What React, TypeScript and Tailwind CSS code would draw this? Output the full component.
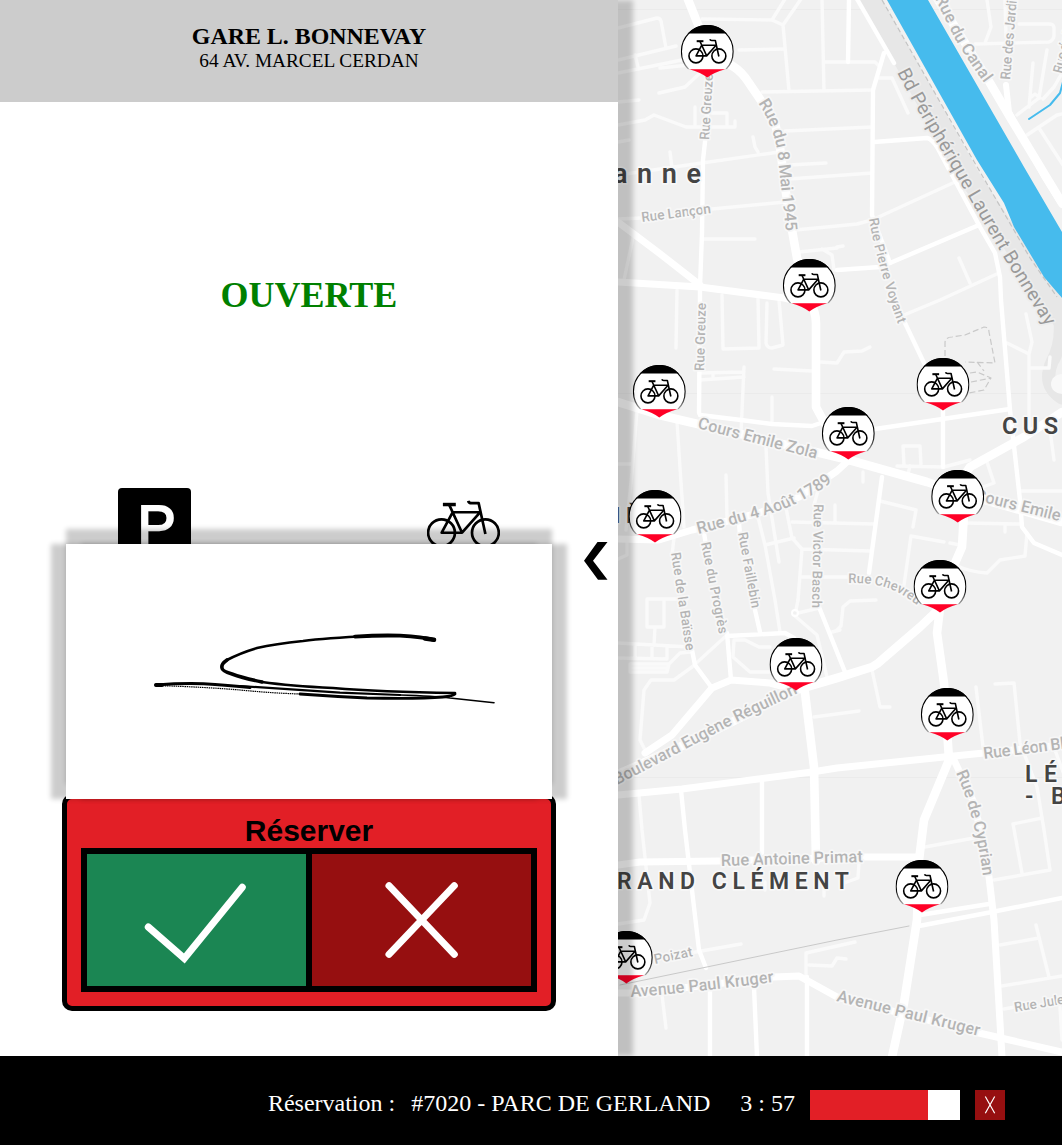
import React from "react";

const minorRoads = [
  "M702 19L772 20L785 -1M772 20L783 25L801 -1M783 25L789 91",
  "M739 50L784 49M822 -1L824 91M762 92L872 90M825 62L875 62L879 66",
  "M785 131L872 127M789 165L826 163M789 179L872 173",
  "M618 28L657 18Q660 18 661 21L666 48M618 60L676 46M618 73L682 60M635 55L638 67",
  "M660 68L689 65M659 93L685 87L700 73M618 102L639 100",
  "M618 125L645 120L654 115L686 127L735 127L735 121M695 126L695 107M712 113L727 113L727 127",
  "M618 142L629 140M618 175L702 163L779 152M670 152L672 168M753 137L755 147L758 152",
  "M618 219L642 218M712 209L785 202M795 230L837 226L857 224L872 220L955 182",
  "M799 252L837 248M822 249L832 255L834 270M704 239L755 239M634 233L624 280",
  "M677 290L676 348M722 295L723 349L759 348L758 298M767 303L766 343Q767 348 772 348L783 345L779 300",
  "M700 373L744 372M700 380L744 377M713 374L713 379M744 367L741 433",
  "M772 397L772 424M774 369L812 371M820 362L837 363L844 352L862 351L870 347",
  "M637 410L632 473L626 530M677 422L684 527M726 475L727 517",
  "M766 447L768 493L779 562M757 513L765 545L775 600L780 632M765 545L794 538",
  "M785 503L792 538L802 549L870 551M802 549L798 600M802 577L850 577",
  "M792 522L874 524M835 505L835 522M618 464L632 464M627 540L627 555L618 559",
  "M819 487L814 505M674 538L672 555",
  "M687 599L647 599L647 627L664 627L664 600M655 627L654 645",
  "M618 643L690 647M618 658L667 659M635 645L635 658M652 646L652 659M667 647L667 659",
  "M630 664L669 664L667 672L630 672ZM630 668L668 668M669 664L680 653L690 652",
  "M727 635L692 667L674 680L651 680L644 690L640 740L646 752",
  "M734 640L745 640L759 647L770 647M734 640L733 657L750 672L769 672",
  "M798 613L819 608M795 616L817 635L827 677M796 610L798 600M832 632L840 630",
  "M814 717L859 711M837 630L841 626L843 607L850 601L876 600",
  "M618 924L644 920L650 903L642 830L639 795M690 953L741 944",
  "M662 995L666 1028M806 977L806 953L855 942M809 965L832 966L837 958L846 959",
  "M844 883L858 878L859 862M824 882L824 896M765 882L765 890",
  "M925 847L974 838M994 880L1050 870L1044 830L1037 787L1020 743L1014 683L995 684",
  "M1022 873L1013 824L1042 818M976 687L983 747M1055 750L1063 772",
  "M1000 945L1039 938M1036 925L1049 977M1002 986L1062 976M1004 1009L1015 1007M1060 1007L1062 1040",
  "M872 670L880 707L890 707M904 315L940 300L999 273",
  "M1007 343L1029 354L1032 342L1026 314M1029 354L1029 430M1029 368L1049 368L1050 357",
  "M897 466L944 467L970 460M904 465L903 446L920 446L921 465M863 472L863 482M910 466L908 474",
  "M880 501L916 510L913 527M904 585L911 536L944 542M950 543L960 545",
  "M987 462L994 483L980 488M1020 491L1062 491M965 523L1020 524M1005 525L1005 532",
  "M955 565Q970 572 987 573L1000 560L1025 556L1027 533M1050 430L1054 460",
  "M879 78L892 78L908 113M959 258L970 283M837 247L843 246",
  "M987 0L991 27L985 43M975 44L1049 42Q1054 40 1054 35L1054 28Q1054 24 1049 24L1019 24M1005 0L1006 37",
  "M1033 63L1029 107M1047 50L1039 98L1017 115M1062 73L1054 87L1043 99M1030 98L1035 94L1040 98",
  "M1027 135L1057 115L1062 114M1039 128L1063 165",
];

const mediumRoads = [
  "M709 75L706 133L703 160L702 233L700 287L700 300L699 413",
  "M849 -1L848 62M857 -1L894 63M884 53L873 90L872 215L890 263M905 323L924 363",
  "M874 142L927 138Q932 139 937 147L980 227L995 253L1000 277L1001 300L1010 410L1020 500L1022 527L1034 543L1062 555",
  "M837 270L880 267L890 263L979 225M875 429L1010 409M943 410L943 467M882 477L869 573",
  "M700 415L741 420L772 424L812 426L824 422M692 650L695 665L712 688M704 533L706 545M739 523L740 535",
  "M727 633L731 680M727 636L785 633L794 638M755 610L760 632M819 607L845 672",
  "M681 790L685 830L699 950L706 968M762 780L762 853M710 987L710 1057M754 987L757 1057M807 977L807 1057",
  "M920 915L989 904M919 926L992 912L1062 898",
];

const mainRoads = [
  "M618 282L700 287L784 298L806 303",
  "M618 539L659 540L692 530L759 513L799 497L837 471L849 460",
  "M645 753L672 735L712 688L731 680L770 683L796 690",
  "M618 795L682 789L812 772L837 768L944 757L984 753L1062 745",
  "M618 865L640 862L719 861L862 857L917 857",
  "M618 993L640 993L774 977L799 976L837 997L979 1033L1062 1052",
  "M954 760L975 805L989 877L994 920L1002 1057",
  "M618 222L659 253L700 285",
];

const wideRoads = [
  "M687 -3L699 27L707 50L734 67Q742 72 749 83L762 102L775 123L780 147L785 187L792 230L797 258L809 300Q816 312 816 323L816 407L824 422L849 460",
  "M618 402L659 415L745 435L849 460L927 482L957 492L1062 522",
  "M618 774L700 738L796 690L837 678L872 667Q878 664 884 658L920 627L940 608L937 633L944 683L949 760L924 820L919 860L917 920L904 1003L892 1057",
  "M805 693L814 767L816 861",
  "M1062 412L1024 437L970 467L958 485L964 513L962 547L955 563L940 590",
  "M937 -2L990 83L1010 117L1062 203",
];

type Label = { t: string; d: string; len: number; s?: number; dark?: boolean };
const labels: Label[] = [
  { t: "Rue Greuze", d: "M709 140L713 74", len: 66, s: 13.5 },
  { t: "Rue du 8 Mai 1945", d: "M758 103Q775 128 778 157L786 231", len: 133 },
  { t: "Rue Lançon", d: "M642 222L712 213", len: 70, s: 13.7 },
  { t: "Rue Greuze", d: "M704 371L706 303", len: 68, s: 13.5 },
  { t: "Bd Périphérique Laurent Bonnevay", d: "M897 72C910 98 922 118 937 143L1004 258L1046 327", len: 295, s: 19, dark: true },
  { t: "Rue du Canal", d: "M935 -2L954 37Q966 58 985 84", len: 99 },
  { t: "Rue des Jardins", d: "M1010 80L1018 -14", len: 94, s: 13.8 },
  { t: "Rue du Marais", d: "M1062 74L1080 0", len: 76, s: 13.5 },
  { t: "Rue Pierre Voyant", d: "M869 219Q877 265 898 324", len: 109, s: 13.5 },
  { t: "Cours Emile Zola", d: "M697 428L817 459", len: 123 },
  { t: "Rue du 4 Août 1789", d: "M698 534Q755 519 784 509Q812 497 832 482", len: 145 },
  { t: "Rue Victor Basch", d: "M814 504L812 608", len: 104, s: 13.5 },
  { t: "Rue Faillebin", d: "M738 533L752 609", len: 77, s: 13.5 },
  { t: "Rue du Progrès", d: "M701 543L719 634", len: 93, s: 13.5 },
  { t: "Rue de la Baïsse", d: "M671 553L686 651", len: 99, s: 13.5 },
  { t: "Rue Chevreul", d: "M848 583C885 582 900 592 918 606", len: 78, s: 13.3 },
  { t: "Cours Emile Zola", d: "M974 500L1096 530", len: 124 },
  { t: "Boulevard Eugène Réguillon", d: "M617 785Q650 768 684 750L735 723L798 693", len: 203 },
  { t: "Rue Léon Blum", d: "M984 759L1087 746", len: 104 },
  { t: "Rue de Cyprian", d: "M956 773Q975 815 983 876", len: 107 },
  { t: "Rue Antoine Primat", d: "M721 866L863 862", len: 142 },
  { t: "Poizat", d: "M655 964L693 956", len: 39, s: 13.8 },
  { t: "Avenue Paul Kruger", d: "M631 997Q690 993 774 982", len: 144 },
  { t: "Avenue Paul Kruger", d: "M836 1001L979 1036", len: 147 },
  { t: "Rue Jules Vallès", d: "M1015 1012L1109 996", len: 96, s: 13.5 },
];

const places = [
  { t: "anne", x: 613, y: 183, len: 88, s: 27 },
  { t: "CUS", x: 1002, y: 434, len: 56, s: 23.5 },
  { t: "LÉ", x: 1025, y: 782, len: 32, s: 23 },
  { t: "-", x: 1025, y: 804, len: 10, s: 23 },
  { t: "B", x: 1051, y: 804, len: 16, s: 23 },
  { t: "RAND CLÉMENT", x: 617, y: 889, len: 232, s: 23 },
  { t: "I", x: 614, y: 523, len: 8, s: 22.5 },
  { t: "È", x: 626, y: 523, len: 16, s: 22.5 },
];

const stations = [
  [707.3, 25], [809.3, 259], [659.3, 365], [848.3, 407], [943, 358], [957.7, 470],
  [655, 490], [940, 560], [796, 638], [947.3, 688], [922, 860], [626.3, 931],
];

function BikeShape({ stroke }: { stroke: number }) {
  return (
    <g fill="none" stroke="#000" strokeWidth={stroke} strokeLinejoin="round">
      <circle cx="14.6" cy="32.8" r="13.5" />
      <circle cx="58.8" cy="32.8" r="13.5" />
      <path d="M25.8 12.2H53.4L35.3 32.8H14.8L25.8 12.2M22.5 5L35.3 32.8" />
      <path d="M16 4.4H29" strokeWidth={stroke + 0.8} />
      <path d="M41.5 0.7Q42 3 45 3H52L54 12.2L58.8 34" />
    </g>
  );
}

function Marker({ x, y }: { x: number; y: number }) {
  return (
    <g transform={`translate(${x - 26.5} ${y})`}>
      <clipPath id="marker-cap"><rect x="0" y="0" width="53" height="8.6" /></clipPath>
      <clipPath id="marker-body"><rect x="0" y="0" width="53" height="44.2" /></clipPath>
      <g clipPath="url(#marker-body)">
        <circle cx="26.5" cy="26.4" r="25.9" fill="#fff" stroke="url(#marker-ring)" strokeWidth="1.2" />
      </g>
      <circle cx="26.5" cy="26.4" r="26.5" clipPath="url(#marker-cap)" />
      <path d="M8.5 44.2H44.5Q32.5 47.5 26.5 52.6Q20.5 47.5 8.5 44.2Z" fill="#ff0026" />
      <g transform="translate(7.6 13.9) scale(.518)"><BikeShape stroke={3.1} /></g>
    </g>
  );
}

function CityMap() {
  return (
    <svg viewBox="618 0 444 1056" className="block h-[1056px] w-[444px]" fontFamily="Roboto, sans-serif">
      <defs>
        <linearGradient id="marker-ring" x1="0" y1="0" x2="0" y2="1">
          <stop offset=".55" stopColor="#000" />
          <stop offset=".85" stopColor="#aaa" />
        </linearGradient>
      </defs>
      <rect x="618" y="0" width="444" height="1056" fill="#f1f1f1" />
      <path d="M618 9.5H1062M618 393.5H1062M618 777.5H1062" stroke="#ebebeb" />
      <g fill="none" strokeLinejoin="round" strokeLinecap="round">
        <path d="M868 -5L970 178L1044 290L1066 325" stroke="#e7e7e7" strokeWidth="21" />
        <path d="M1060 320Q1062 345 1052 362Q1042 385 1062 398" stroke="#e7e7e7" strokeWidth="13" />
        <ellipse cx="1062" cy="384" rx="11" ry="10" fill="#f8f8f8" stroke="none" />
        <g stroke="#fafafa" strokeWidth="3.4">{minorRoads.map((d) => <path key={d} d={d} />)}</g>
        <circle cx="795" cy="613" r="3" stroke="#fff" strokeWidth="2" />
        <g stroke="#fff" strokeWidth="4.4">{mediumRoads.map((d) => <path key={d} d={d} />)}</g>
        <g stroke="#fff" strokeWidth="7">{mainRoads.map((d) => <path key={d} d={d} />)}</g>
        <g stroke="#fff" strokeWidth="8.6">{wideRoads.map((d) => <path key={d} d={d} />)}</g>
        <path d="M1006 85L1009 112L1045 178L1062 205" stroke="#fff" strokeWidth="6" />
        <path d="M620 985L837 940L909 926" stroke="#c9c9c9" strokeWidth="1" />
        <path d="M882 0L969 153L1004 213L1030 258L1057 297" stroke="#c4c4c4" strokeWidth="1.2" strokeDasharray="5 3" strokeLinecap="butt" />
        <path d="M945 356V342Q946 337 952 337L965 335L984 327Q989 327 989 332L995 363L965 362M970 373L977 372L991 378L984 390L969 393M971 382L991 378M977 362L984 371" stroke="#c9c9c9" strokeWidth="1.2" strokeDasharray="6 3" strokeLinecap="butt" />
        <path d="M1029 119L1050 105L1060 93L1063 82" stroke="#46bbed" strokeWidth="2" />
      </g>
      <path d="M887 0H928L1024 167L1062 232V298L1044 277L1014 227L1004 203L977 160Z" fill="#46bbed" />
      <g stroke="#f7f7f7" strokeWidth="3.5" strokeLinejoin="round" paintOrder="stroke" fontWeight="500">
        {labels.map((l, i) => (
          <g key={i}>
            <path id={`street-${i}`} d={l.d} fill="none" stroke="none" />
            <text fontSize={l.s ?? 16.5} fill={l.dark ? "#999" : "#b4b4b4"} fontWeight={l.dark ? 400 : 500} stroke={l.dark ? "#ededed" : "#f7f7f7"}>
              <textPath href={`#street-${i}`} textLength={l.len}>{l.t}</textPath>
            </text>
          </g>
        ))}
      </g>
      <g stroke="#f8f8f8" strokeWidth="3.5" strokeLinejoin="round" paintOrder="stroke" fill="#444" fontWeight="600">
        {places.map((p, i) => (
          <text key={i} x={p.x} y={p.y} fontSize={p.s} textLength={p.len}>{p.t}</text>
        ))}
      </g>
      {stations.map(([x, y]) => <Marker key={`${x}-${y}`} x={x} y={y} />)}
    </svg>
  );
}

function Signature() {
  return (
    <svg viewBox="66 544 486 255" className="block h-[255px] w-[486px]" fill="none" stroke="#000" strokeLinecap="round" strokeLinejoin="round">
      <path d="M434 640Q423 637 400 635.7Q380 635 355 636.7" strokeWidth="3.8" />
      <path d="M434 639.7L425 638.5" strokeWidth="4.6" />
      <path d="M370 636Q325 638 303 641Q275 644 257 648Q240 653 227 660" strokeWidth="2.6" />
      <path d="M227 660Q221 664 222 668Q222 671 232 674Q243 678 262 682" strokeWidth="3.6" />
      <path d="M262 682Q290 686 333 688Q380 692 455 693" strokeWidth="2.6" />
      <path d="M455 694Q453 696 443 697Q420 699 367 698Q335 696.5 300 694" strokeWidth="2.8" />
      <path d="M300 694Q270 693 240 690Q205 687 156 685.5" strokeWidth="1.2" strokeDasharray="1.5 .7" strokeLinecap="butt" />
      <path d="M156 685Q190 682.5 215 684.5Q235 686 250 687.5" strokeWidth="3" />
      <path d="M156 685H162" strokeWidth="4" />
      <path d="M240 686L340 692.7L400 695" strokeWidth="2.2" />
      <path d="M400 695Q435 696 450 698L494 702.7" strokeWidth="1.6" />
    </svg>
  );
}

export default function App() {
  return (
    <div className="flex h-[1145px] w-[1062px] flex-col overflow-hidden bg-white font-['Liberation_Serif',serif] text-black">
      <div className="flex h-[1056px]">
        <section className="relative z-10 flex w-[618px] shrink-0 flex-col bg-white shadow-[15px_0_5px_rgba(0,0,0,0.2)]">
          <header className="flex h-[102px] flex-col items-center bg-[#ccc] pt-[22px]">
            <h1 className="text-[23.9px] leading-[28px] font-bold">GARE L. BONNEVAY</h1>
            <p className="text-[19.3px] leading-[22px]">64 AV. MARCEL CERDAN</p>
          </header>
          <p className="mt-[171px] h-11 text-center text-[36px] leading-[44px] font-bold text-[#008000]">OUVERTE</p>
          <div className="mt-[171px] flex h-14 justify-between pr-[118px] pl-[118px]">
            <div className="flex h-[73px] w-[73px] items-start justify-center rounded-[4px] bg-black font-['Liberation_Sans',sans-serif] text-[58px] leading-[75px] text-white [-webkit-text-stroke:1.8px_white]">
              <span className="ml-1">P</span>
            </div>
            <svg viewBox="0 -1 73.5 49" className="mt-[11px] h-[49px] w-[73px]">
              <BikeShape stroke={2.7} />
            </svg>
          </div>
          <div className="relative flex">
            <div className="z-10 ml-[66px] h-[255px] w-[486px] bg-white shadow-[15px_0_5px_rgba(0,0,0,0.2),-15px_0_5px_rgba(0,0,0,0.2),0_-15px_5px_rgba(0,0,0,0.2)]">
              <Signature />
            </div>
            <svg viewBox="0 0 24 38" className="mt-[-2px] ml-8 h-[38px] w-[24px]">
              <path d="M13.5 0H23.5L9 18.8L23.5 37.8H14L0 18.8Z" />
            </svg>
          </div>
          <div className="mt-[-5px] ml-[62px] flex h-[217px] w-[494px] flex-col items-center rounded-[10px] border-[5px] border-black bg-[#e21f26]">
            <h2 className="mt-[15px] h-[34px] font-['Liberation_Sans',sans-serif] text-[30px] leading-[34px] font-bold">Réserver</h2>
            <div className="flex h-[144px] w-[456px] gap-[6px] border-[6px] border-black bg-black">
              <button className="flex-1 bg-[#1b8653]" aria-label="Valider">
                <svg viewBox="87 854 219 132" className="h-[132px] w-[219px]" fill="none" stroke="#fff" strokeWidth="7" strokeLinecap="round">
                  <path d="M148.3 927L184.3 958.5L242.3 887.3" />
                </svg>
              </button>
              <button className="flex-1 bg-[#960f10]" aria-label="Annuler">
                <svg viewBox="312 854 219 132" className="h-[132px] w-[219px]" fill="none" stroke="#fff" strokeWidth="7" strokeLinecap="round">
                  <path d="M389 885.7L454.3 954.3M454.3 885.7L389 954.3" />
                </svg>
              </button>
            </div>
          </div>
        </section>
        <CityMap />
      </div>
      <footer className="flex h-[89px] items-center justify-end bg-black pt-[9px] pr-[57px] text-[24px] text-white">
        <span className="mr-4 pb-1">Réservation :</span>
        <span className="mr-[30px] pb-1">#7020 - PARC DE GERLAND</span>
        <span className="mr-[15px] pb-1">3 : 57</span>
        <div className="mr-[15px] h-[30px] w-[150px] bg-white">
          <div className="h-full w-[118px] bg-[#e21f26]" />
        </div>
        <button className="h-[30px] w-[30px] bg-[#960f10]" aria-label="Fermer">
          <svg viewBox="0 0 30 30" className="h-[30px] w-[30px]" stroke="#fff" strokeWidth="1.2">
            <path d="M10.3 6.5L19.7 23.3M19.7 6.5L10.3 23.3" />
          </svg>
        </button>
      </footer>
    </div>
  );
}
